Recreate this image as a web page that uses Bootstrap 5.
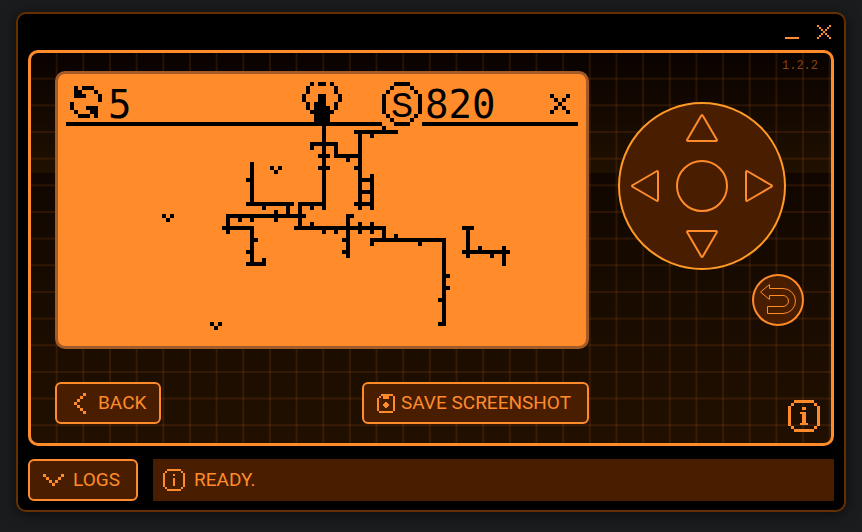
<!DOCTYPE html>
<html lang="en">
<head>
<meta charset="utf-8">
<meta name="viewport" content="width=device-width, initial-scale=1">
<title>Device screen</title>
<link href="https://cdn.jsdelivr.net/npm/bootstrap@5.3.0/dist/css/bootstrap.min.css" rel="stylesheet">
<style>
:root { --amber: #ff8b2a; --brown: #491d00; --tile: calc(80px / 3); }
body { background: #1b1c1e; color: var(--amber); font: 400 19px/24px Roboto, sans-serif; }
svg { display: block; fill: currentColor; }
.pixel { shape-rendering: crispEdges; }
.app-window { margin: 12px 16px 20px; padding: 0 10px 9px; background: #000; border: 2px solid #662f00; border-radius: 10px; box-shadow: 0 2px 14px rgba(0,0,0,.6); }
.title-bar { height: 36px; gap: 18px; padding-right: 3px; }
.plain-btn { background: none; border: 0; padding: 0; color: var(--amber); }
.stage { border: 3px solid var(--amber); border-radius: 10px; padding: 0 11px 0 24px; gap: 29px;
  background:
    linear-gradient(to left, rgba(255,125,40,.11) 2px, transparent 2px) 0 0 / var(--tile) var(--tile),
    linear-gradient(to top, rgba(255,125,40,.11) 2px, transparent 2px) 0 0 / var(--tile) var(--tile),
    linear-gradient(#090200, #201000) 0 0 / 100% 120px no-repeat,
    linear-gradient(#0c0400 120px, #110700 121px, #211000); }
.left-side { padding: 18px 0 19px; gap: 33px; }
.right-side { padding: 5px 0 11px; }
.lcd { background: var(--amber); border: 3px solid #a15a28; border-radius: 10px; padding: 8px; color: #000; }
.lcd svg { width: 512px; max-width: 100%; height: auto; }
.lcd text { font: 39px "DejaVu Sans Mono", monospace; }
.lcd .coin { font: 37px "Liberation Mono", monospace; }
.cells-h, .cells-v { stroke: #000; stroke-width: 1; fill: none; shape-rendering: crispEdges; }
.frame-btn { height: 42px; background: var(--brown); border: 2px solid var(--amber); border-radius: 6px; color: var(--amber); line-height: 24px; }
.back-btn { width: 106px; gap: 12px; padding: 0 0 0 17px; }
.save-btn { width: 227px; gap: 6px; padding: 0 0 0 13px; }
.logs-btn { width: 110px; gap: 9px; padding: 0 0 0 13px; }
.version { font: 12px/16px "Liberation Mono", monospace; color: #824617; padding-right: 2px; }
.pad { width: 168px; height: 168px; margin-top: 28px; border: 2px solid #ff9a26; background: var(--brown); border-radius: 50%; display: grid; grid-template: repeat(3, 52px) / repeat(3, 52px); gap: 4px; }
.pad svg, .return-btn svg { fill: none; stroke: var(--amber); stroke-width: 2; stroke-linejoin: round; }
.pad .up { grid-area: 1 / 2; }
.pad .left { grid-area: 2 / 1; }
.pad .ok { grid-area: 2 / 2; border: 2px solid var(--amber); border-radius: 50%; }
.pad .right { grid-area: 2 / 3; }
.pad .down { grid-area: 3 / 2; }
.return-btn { width: 52px; height: 52px; margin: 4px 16px 0 0; border-radius: 50%; background: var(--brown); box-shadow: inset 0 0 0 2px var(--amber); }
.return-btn svg { stroke-width: 1; stroke-linejoin: miter; }
.bottom-bar { margin-top: 13px; gap: 15px; }
.status { background: var(--brown); padding: 0 10px; gap: 9px; }
</style>
</head>
<body>
<main class="app-window">
  <header class="title-bar d-flex justify-content-end align-items-center">
    <button class="plain-btn" type="button" aria-label="Minimize"><svg class="pixel" width="14" height="14"><path d="M0 12h14v2H0z"/></svg></button>
    <button class="plain-btn" type="button" aria-label="Close"><svg class="pixel" width="14" height="14" viewBox="0 0 7 7"><path d="M0 0h1v1H0zM1 1h1v1H1zM2 2h1v1H2zM3 3h1v1H3zM4 4h1v1H4zM5 5h1v1H5zM6 6h1v1H6zM6 0h1v1H6zM5 1h1v1H5zM4 2h1v1H4zM2 4h1v1H2zM1 5h1v1H1zM0 6h1v1H0z"/></svg></button>
  </header>

  <section class="stage d-flex">
    <div class="left-side d-flex flex-column">
      <div class="lcd">
        <svg viewBox="0 0 512 256" role="img" aria-label="Map display">
          <g transform="scale(4)">
            <!-- horizontal runs of cells -->
            <path class="cells-h" transform="translate(0 .5)" d="M0 10h79M89 10h39
              M3 8h3M7 8h1M2 1h1M4 1h3M2 2h2M7 2h1M2 3h3M5 6h3M2 7h1M6 7h2
              M61 0h1M63 0h2M66 0h1M61 7h1M66 7h1
              M82 0h4M81 1h1M86 1h1M80 2h1M87 2h1M80 8h1M87 8h1M81 9h1M86 9h1M82 10h4
              M121 3h1M122 4h1M123 5h1M124 6h1M125 7h1M125 3h1M124 4h1M122 6h1M121 7h1
              M79 11h1M72 12h11M76 13h1M61 15h7M61 16h1M63 18h3M67 18h7M70 19h1M63 21h3M72 21h1
              M73 24h4M73 27h4M72 30h5M45 24h1M45 30h12M58 30h7M49 31h1M61 31h1
              M51 21h1M53 21h1M52 22h1M24 33h1M26 33h1M25 34h1M36 60h1M38 60h1M37 61h1
              M40 33h20M43 34h1M46 34h1M39 36h8M47 39h1M45 42h1M45 45h5M49 44h1
              M57 36h23M61 35h1M64 37h1M67 37h1M70 33h2M69 39h1M69 42h1
              M76 39h19M76 40h1M82 38h1M88 40h1M95 48h1M95 51h1M93 54h1M93 60h2
              M99 36h3M99 42h12M103 41h1M106 43h1"/>
            <!-- vertical runs of cells -->
            <path class="cells-v" transform="translate(.5 0)" d="M8 3v2M1 5v2M2 1v3M7 6v3
              M60 1v2M59 3v2M60 5v2M67 1v2M68 3v2M67 5v2M62 5v6M63 3v8M64 3v29M65 6v5
              M79 3v5M88 3v5M46 20v11M67 15v4M73 12v20M76 23v9M55 30v4M58 30v7M52 32v3
              M40 33v5M46 36v10M70 33v11M73 35v3M76 35v3M79 36v4M94 39v22M100 36v8M109 41v5"/>
          </g>
          <text x="42" y="36">5</text>
          <text class="coin" x="336" y="35" text-anchor="middle">S</text>
          <text x="359" y="36">820</text>
        </svg>
      </div>
      <div class="d-flex justify-content-between">
        <button class="frame-btn back-btn d-flex align-items-center" type="button">
          <svg class="pixel" width="12" height="21" viewBox="0 0 4 7"><path d="M3 0h1v1H3zM2 1h1v1H2zM1 2h1v1H1zM0 3h1v1H0zM1 4h1v1H1zM2 5h1v1H2zM3 6h1v1H3z"/></svg>
          <span>BACK</span>
        </button>
        <button class="frame-btn save-btn d-flex align-items-center" type="button">
          <svg class="pixel" width="18" height="19"><path d="M4 0h12v2H4zM6 2h6v3H6zM2 2h2v2H2zM0 4h2v13H0zM16 2h2v15h-2zM2 17h14v2H2zM8 8h2v6H8zM6 10h6v2H6zM7 9h4v4H7z"/></svg>
          <span>SAVE SCREENSHOT</span>
        </button>
      </div>
    </div>

    <div class="right-side d-flex flex-column flex-grow-1 align-items-end">
      <span class="version">1.2.2</span>
      <div class="pad align-self-start">
        <button class="plain-btn up" type="button" aria-label="Up"><svg width="52" height="52"><path d="M25 12q1-2 2 0L41 36q0 1-1 1H12q-1 0-1-1z"/></svg></button>
        <button class="plain-btn left" type="button" aria-label="Left"><svg width="52" height="52"><path d="M13 25q-2 1 0 2L37 41q1 0 1-1V12q0-1-1-1z"/></svg></button>
        <button class="plain-btn ok" type="button" aria-label="OK"></button>
        <button class="plain-btn right" type="button" aria-label="Right"><svg width="52" height="52"><path d="M39 25q2 1 0 2L15 41q-1 0-1-1V12q0-1 1-1z"/></svg></button>
        <button class="plain-btn down" type="button" aria-label="Down"><svg width="52" height="52"><path d="M25 40q1 2 2 0L41 16q0-1-1-1H12q-1 0-1 1z"/></svg></button>
      </div>
      <button class="plain-btn return-btn" type="button" aria-label="Return"><svg width="52" height="52"><path d="M8.500 18L17.500 10.500V14.500H31a12.500 12.500 0 0 1 0 25H15.500V32.500H31a5.500 5.500 0 0 0 0-11H17.500V25.500z"/></svg></button>
      <button class="plain-btn mt-auto" type="button" aria-label="Information"><svg class="pixel" width="32" height="32"><path d="M6 0h20v3H6zM6 29h20v3H6zM0 6h3v20H0zM29 6h3v20h-3zM3 3h3v3H3zM26 3h3v3h-3zM3 26h3v3H3zM26 26h3v3h-3zM14 7h4v3h-4zM12 12h6v2h-6zM14 14h4v9h-4zM12 23h8v2h-8z"/></svg></button>
    </div>
  </section>

  <footer class="bottom-bar d-flex">
    <button class="frame-btn logs-btn d-flex align-items-center" type="button">
      <svg class="pixel" width="21" height="12" viewBox="0 0 7 4"><path d="M0 0h1v1H0zM1 1h1v1H1zM2 2h1v1H2zM3 3h1v1H3zM4 2h1v1H4zM5 1h1v1H5zM6 0h1v1H6z"/></svg>
      <span>LOGS</span>
    </button>
    <div class="status d-flex align-items-center flex-grow-1" role="status">
      <svg class="pixel" width="22" height="22"><path d="M4 0h14v2H4zM4 20h14v2H4zM0 4h2v14H0zM20 4h2v14h-2zM2 2h2v2H2zM18 2h2v2h-2zM2 18h2v2H2zM18 18h2v2h-2zM10 5h2v2h-2zM10 9h2v8h-2z"/></svg>
      <span>READY.</span>
    </div>
  </footer>
</main>
<script src="https://cdn.jsdelivr.net/npm/bootstrap@5.3.0/dist/js/bootstrap.bundle.min.js"></script>
</body>
</html>
